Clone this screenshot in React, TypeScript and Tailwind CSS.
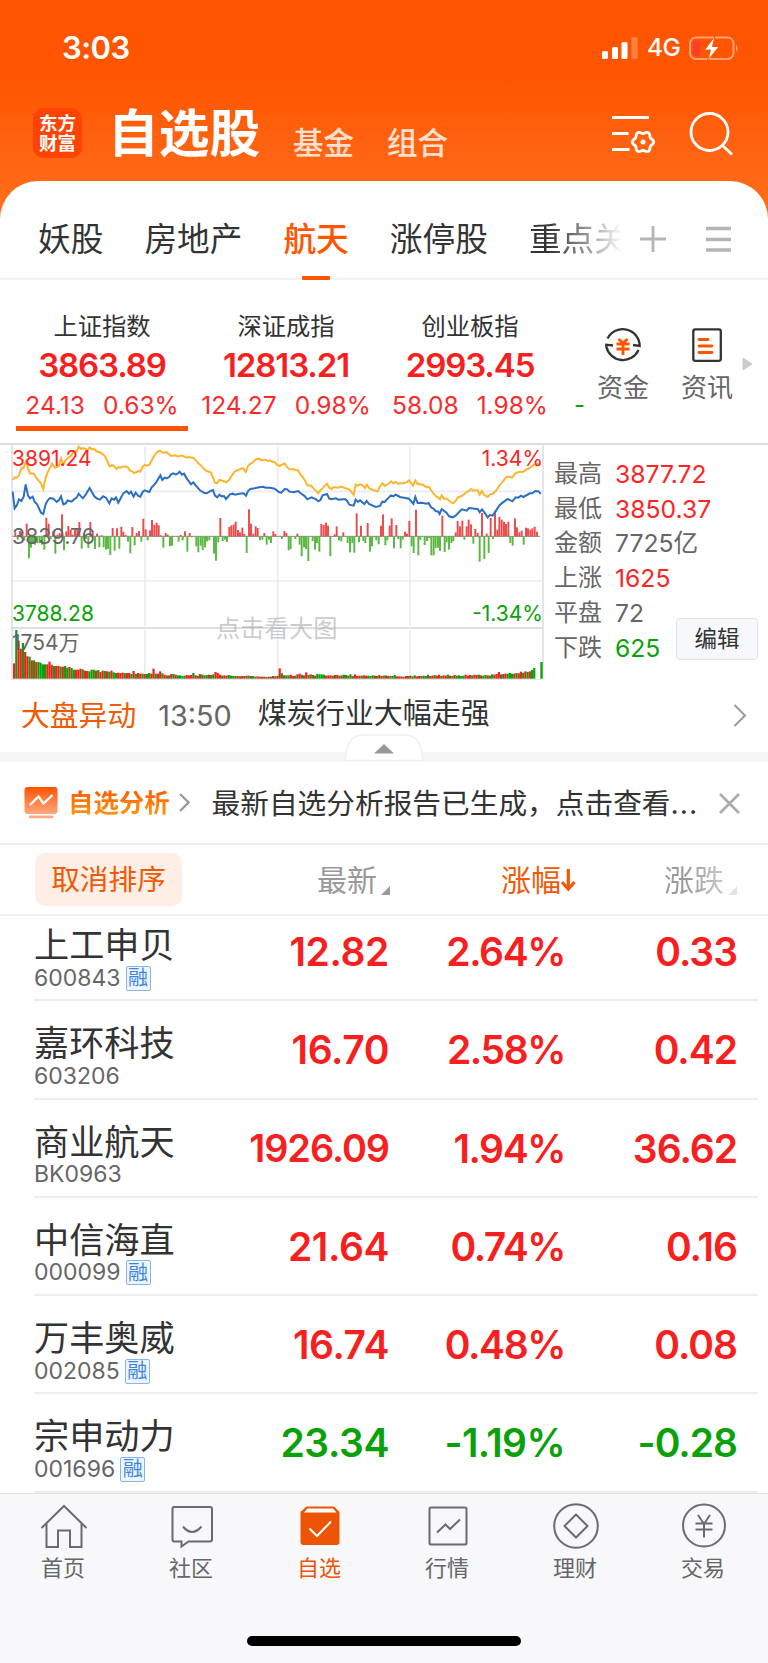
import type { ReactNode } from "react";

const UP = "#f62020";
const DOWN = "#0ba10b";

const indices = [
  { name: "上证指数", value: "3863.89", diff: "24.13", pct: "0.63%", active: true },
  { name: "深证成指", value: "12813.21", diff: "124.27", pct: "0.98%" },
  { name: "创业板指", value: "2993.45", diff: "58.08", pct: "1.98%" },
];

const summary = [
  { label: "最高", value: "3877.72", color: "text-[#fa2525]" },
  { label: "最低", value: "3850.37", color: "text-[#fa2525]" },
  { label: "金额", value: "7725亿", color: "text-[#666]" },
  { label: "上涨", value: "1625", color: "text-[#fa2525]" },
  { label: "平盘", value: "72", color: "text-[#666]" },
  { label: "下跌", value: "625", color: "text-[#0ba10b]" },
];

const stocks = [
  { name: "上工申贝", code: "600843", margin: true, price: "12.82", pct: "2.64%", diff: "0.33", up: true },
  { name: "嘉环科技", code: "603206", margin: false, price: "16.70", pct: "2.58%", diff: "0.42", up: true },
  { name: "商业航天", code: "BK0963", margin: false, price: "1926.09", pct: "1.94%", diff: "36.62", up: true },
  { name: "中信海直", code: "000099", margin: true, price: "21.64", pct: "0.74%", diff: "0.16", up: true },
  { name: "万丰奥威", code: "002085", margin: true, price: "16.74", pct: "0.48%", diff: "0.08", up: true },
  { name: "宗申动力", code: "001696", margin: true, price: "23.34", pct: "-1.19%", diff: "-0.28", up: false },
];

// chart coordinates are in thirds of a pixel
const avgLine =
  "38,150 44,142 50,143 57,136 64,115 71,113 78,93 84,115 90,131 98,130 104,134 110,145 116,152 123,160 130,177 137,143 144,125 150,113 157,101 163,113 176,109 183,85 190,103 196,92 203,85 215,75 222,62 230,65 236,50 243,57 249,54 256,57 263,60 269,52 276,58 283,57 289,64 296,66 303,68 310,74 316,80 322,93 329,109 335,106 342,107 349,117 355,111 362,113 369,110 376,109 383,112 390,122 396,124 402,129 409,126 415,123 421,125 428,110 434,105 441,107 448,104 455,91 461,80 468,70 474,64 480,62 487,68 500,66 506,72 513,78 526,76 533,80 546,76 553,80 560,83 566,81 580,84 586,89 593,98 600,104 613,118 620,123 632,127 639,142 645,158 651,160 658,150 670,153 679,157 687,150 694,139 700,130 707,122 714,121 724,115 731,116 737,126 744,108 750,102 757,99 763,92 770,87 777,86 784,91 797,89 804,93 810,91 817,95 824,96 831,104 838,108 846,104 854,100 860,110 868,118 881,118 895,122 902,135 908,141 914,150 922,166 934,167 941,176 948,182 955,190 961,181 968,175 975,167 981,161 988,174 995,177 1001,171 1015,173 1022,170 1035,174 1048,179 1054,186 1061,195 1067,164 1074,167 1081,163 1088,166 1095,174 1101,164 1108,175 1120,180 1133,184 1140,170 1147,160 1154,168 1167,160 1173,154 1180,160 1187,156 1194,161 1207,160 1220,157 1227,151 1233,158 1239,167 1246,151 1253,163 1266,163 1280,172 1286,170 1293,180 1300,190 1307,198 1314,202 1320,208 1325,196 1332,206 1340,206 1353,216 1360,220 1367,213 1373,203 1387,197 1400,186 1407,183 1413,177 1420,182 1433,180 1439,194 1446,183 1453,195 1463,201 1470,193 1478,192 1490,180 1497,168 1504,160 1512,150 1520,140 1528,140 1536,143 1546,130 1556,126 1570,125 1580,118 1592,112 1602,104 1612,102 1622,103";
const priceLine =
  "38,185 44,235 51,225 57,208 64,213 71,200 77,163 84,197 90,205 98,200 104,216 111,222 117,235 123,248 130,252 137,222 144,210 150,204 160,206 170,216 177,210 183,199 190,223 197,220 203,211 215,215 222,208 230,203 236,191 243,199 249,205 257,194 263,184 269,174 276,187 283,199 290,205 300,209 309,199 318,203 328,220 335,205 342,209 348,202 355,218 362,205 370,190 380,183 387,191 393,185 401,200 407,188 415,198 421,200 428,186 434,181 441,184 448,186 455,172 461,166 468,158 474,148 481,136 487,150 494,143 500,145 507,141 513,133 520,130 527,133 533,131 539,125 546,134 552,131 560,145 573,163 580,157 587,166 600,181 613,189 620,190 632,183 639,180 645,197 652,202 658,194 665,199 672,198 678,207 690,193 698,191 705,194 718,191 731,190 738,197 744,183 751,177 764,175 777,172 790,170 797,173 810,173 824,176 838,187 844,188 854,177 862,178 868,185 881,187 895,183 902,190 915,199 922,208 935,202 948,208 955,214 961,210 968,196 981,192 988,206 995,208 1008,205 1015,209 1035,207 1041,212 1048,224 1061,227 1067,209 1074,216 1080,211 1093,222 1100,213 1107,222 1127,231 1140,228 1147,215 1154,216 1160,209 1173,196 1180,199 1187,194 1200,201 1227,206 1240,222 1246,201 1253,219 1266,218 1280,221 1286,219 1293,232 1300,236 1307,243 1315,245 1319,252 1325,237 1340,249 1347,259 1358,262 1367,257 1380,243 1386,238 1400,242 1407,234 1425,236 1433,237 1439,247 1446,238 1453,247 1463,262 1470,255 1478,257 1488,242 1497,228 1505,220 1523,207 1537,214 1547,202 1555,203 1563,197 1570,201 1590,190 1597,190 1606,183 1616,184 1622,192";

// [x, height], positive above the zero line
const flow = [
  [46,12],[53,-10],[60,16],[67,14],[73,-12],[80,38],[87,-66],[93,-34],[99,-22],[105,-25],[112,-20],[119,-20],[126,-25],[133,-40],[139,56],[146,38],[152,-8],[159,15],[166,-52],[172,5],[179,10],[186,66],[192,-42],[199,15],[205,31],[212,20],[218,5],[225,20],[232,22],[238,43],[245,-37],[252,8],[258,-8],[265,-35],[271,43],[278,15],[285,-38],[291,8],[298,-33],[305,3],[311,-33],[318,-40],[324,-38],[331,-56],[338,25],[344,-43],[351,24],[358,-37],[364,29],[370,14],[377,4],[384,-16],[391,-51],[397,28],[404,-27],[410,10],[417,16],[424,-16],[430,53],[437,21],[443,-12],[450,18],[456,49],[463,35],[470,41],[476,33],[483,3],[490,-34],[497,10],[503,5],[510,-30],[516,-28],[536,-16],[542,4],[548,-12],[555,15],[562,-46],[569,10],[575,-3],[589,-30],[595,-48],[602,-28],[608,-41],[615,-33],[621,-15],[628,-12],[642,-52],[648,-73],[655,-18],[661,55],[668,-14],[675,-10],[681,-17],[688,28],[694,33],[701,35],[707,44],[714,19],[720,12],[727,26],[733,7],[740,-50],[747,81],[753,38],[760,8],[767,30],[773,25],[780,-12],[787,-10],[793,10],[800,-25],[807,-10],[813,-20],[820,15],[826,7],
  [846,-8],[853,16],[859,10],[866,-42],[872,-38],[886,-8],[892,8],[899,-25],[905,-60],[912,-33],[918,-38],[925,-74],[938,-14],[945,-40],[951,-20],[958,-46],[964,37],[971,34],[978,41],[984,32],[991,-60],[1004,6],[1010,30],[1017,-12],[1024,-15],[1030,12],[1043,-20],[1050,-48],[1057,-20],[1063,-49],[1070,69],[1077,-18],[1083,31],[1090,-14],[1096,-20],[1103,40],[1110,-46],[1116,-30],[1123,-3],[1129,-12],[1136,-24],[1143,32],[1149,66],[1156,-27],[1162,-12],[1169,32],[1175,54],[1182,-36],[1189,34],[1195,-8],[1202,-36],[1208,-10],[1215,14],[1221,8],[1228,46],[1235,-30],[1241,-50],[1248,80],[1255,-57],[1261,-10],[1274,-26],[1281,-14],[1288,-5],[1294,-57],[1301,-57],[1307,-35],[1314,-34],[1320,-44],[1327,62],[1334,-47],[1340,-18],[1347,-40],[1354,-20],[1360,-15],[1367,12],[1373,46],[1380,30],[1387,47],[1393,-10],[1400,30],[1406,50],[1413,36],[1420,-22],[1426,22],[1433,10],[1439,-76],[1446,70],[1453,-68],[1460,8],[1466,-50],[1472,55],[1479,-8],[1485,70],[1492,20],[1498,58],[1505,50],[1512,44],[1518,37],[1525,44],[1531,-20],[1538,-28],[1545,54],[1551,27],[1558,12],[1565,17],[1571,-25],[1578,26],[1584,24],[1591,20],[1597,24],[1604,29],[1611,14],
];

const volume = [
  46,146,114,90,107,80,67,66,55,55,50,50,48,43,43,43,51,42,38,38,38,36,36,38,33,35,32,27,27,27,30,28,24,23,22,27,27,24,26,20,24,23,22,21,24,19,17,18,17,18,17,17,17,14,23,14,17,15,15,14,14,17,15,30,15,15,22,16,12,10,10,14,14,12,10,10,8,9,11,10,11,17,10,9,14,12,10,11,12,11,13,20,17,12,9,10,9,11,9,8,8,8,7,8,8,9,9,8,8,6,7,6,6,6,5,6,6,8,7,8,31,16,10,10,10,12,8,9,13,15,12,10,19,11,13,11,9,14,13,13,12,9,10,10,9,11,11,9,10,12,11,9,13,8,13,8,9,9,10,9,9,8,10,9,8,11,8,9,10,8,8,8,11,7,7,7,6,8,8,9,7,10,7,8,8,9,8,12,8,9,11,9,12,8,10,9,12,9,8,11,9,10,8,9,12,9,11,10,12,11,12,10,9,11,10,9,13,12,14,20,13,14,15,15,17,15,15,17,16,21,18,22,20,22,26,32,
];
const volumeColors = "rgrrgrrgrgrggggrrrgrrgrggrggrrrgrrgggrgrrgrgrggrrrgrrgrgrrgrggr";

function Flow() {
  return (
    <svg className="block h-[237px] w-[533px]" viewBox="33 39 1599 711">
      <g stroke="#e9ecf2" strokeWidth="5" fill="none">
        <path d="M37 184H1628M37 453H1628M435 50V587M833 50V587M1230 50V587M435 600V744M833 600V744M1230 600V744" />
      </g>
      <path d="M36 40V748M1629 40V748" stroke="#dde0e5" strokeWidth="5" />
      <path d="M33 594H1629" stroke="#d2d7dc" strokeWidth="5" />
      <path d="M33 748H1629" stroke="#dde0e5" strokeWidth="3" />
      <path d="M37 319H1621" stroke="#888" strokeWidth="3" />
      {flow.map(([x, h], i) => (
        <rect key={i} x={x - 2.9} y={h > 0 ? 319 - h : 319} width="5.8" height={Math.abs(h)} fill={h > 0 ? "#ec4a4a" : "#58b83f"} />
      ))}
      {volume.map((h, i) => (
        <rect
          key={i}
          x={39 + i * 6.64}
          y={746 - h}
          width="6.64"
          height={h}
          fill={volumeColors[i % volumeColors.length] === "r" ? UP : DOWN}
        />
      ))}
      <rect x="1621" y="696" width="7" height="50" fill={DOWN} />
      <polyline points={avgLine} fill="none" stroke="#fdb52e" strokeWidth="6" />
      <polyline points={priceLine} fill="none" stroke="#2b6fc0" strokeWidth="6" />
    </svg>
  );
}

function StatusBar() {
  return (
    <div className="flex h-[95px] items-center justify-between pr-[29px] pl-[62px]">
      <span className="text-[31px] leading-none font-semibold tracking-[-0.5px]">3:03</span>
      <div className="flex items-center">
        <svg width="36" height="24" viewBox="0 0 36 24" fill="#fff">
          <rect x="0" y="15" width="6" height="8" rx="1.5" />
          <rect x="10" y="11" width="6" height="12" rx="1.5" />
          <rect x="19.500" y="6" width="6" height="17" rx="1.5" />
          <rect x="29.500" y="1" width="6" height="22" rx="1.5" opacity=".25" />
        </svg>
        <span className="ml-[9px] text-[24.500px] leading-none font-medium tracking-[-0.7px]">4G</span>
        <svg className="ml-[9px]" width="50" height="26" viewBox="0 0 50 26">
          <rect x="1" y="2.500" width="43.500" height="21.500" rx="6" fill="none" stroke="#fff" strokeOpacity=".45" strokeWidth="2" />
          <path d="M47 9.500a6 6 0 0 1 0 7.500z" fill="#fff" fillOpacity=".5" />
          <rect x="4" y="5.500" width="6.500" height="15.500" rx="2.500" fill="#ff3b30" />
          <path d="M26 1 15.500 15h6L18.500 26 30 11.500h-6.500L26 1z" fill="#fff" stroke="#ff5a00" strokeWidth="1" />
        </svg>
      </div>
    </div>
  );
}

// six-lobed settings wheel
const gear = Array.from({ length: 72 }, (_, i) => {
  const a = (i / 72) * Math.PI * 2;
  const r = 9.6 + 1.1 * Math.cos(6 * a);
  return `${(31 + r * Math.cos(a)).toFixed(2)},${(29 + r * Math.sin(a)).toFixed(2)}`;
}).join(" ");

function Header() {
  return (
    <div className="flex h-[86px] items-center pr-[34px] pl-[33px]">
      <div className="mt-[-10px] flex h-[50px] w-[49px] flex-col items-center justify-center rounded-[11px] bg-[#ff4304] text-[18.500px] leading-[20px] font-bold">
        <span>东方</span>
        <span>财富</span>
      </div>
      <span className="mt-[-8px] ml-[26px] text-[50.700px] leading-none font-bold">自选股</span>
      <span className="mt-[10px] ml-[33px] text-[30.500px] leading-none font-medium text-white/80">基金</span>
      <span className="mt-[10px] ml-[33px] text-[30.500px] leading-none font-medium text-white/80">组合</span>
      <svg className="mt-[-10px] ml-auto" width="44" height="40" viewBox="0 0 44 40" fill="none" stroke="#fff" strokeWidth="2.800">
        <path d="M0 4.500h37M0 20.500h16.500M0 36.500h17.500" />
        <polygon points={gear} strokeLinejoin="round" />
        <circle cx="31" cy="29" r="2.500" fill="#fff" stroke="none" />
      </svg>
      <svg className="mt-[-9px] ml-[33px]" width="45" height="46" viewBox="0 0 45 46" fill="none" stroke="#fff" strokeWidth="2.800">
        <circle cx="20.500" cy="21" r="18.500" />
        <path d="M33.500 34.500 43 43.500" />
      </svg>
    </div>
  );
}

function Tabs() {
  return (
    <div className="flex h-[99px] items-center border-b-2 border-[#f2f2f3] pt-[18px] pr-[36px] pl-[38px] text-[32.700px] leading-[56px] text-[#333]">
      <div className="flex w-[584px] gap-[41px] overflow-hidden whitespace-nowrap">
        <span>妖股</span>
        <span>房地产</span>
        <span className="font-medium text-[#ff5500]">航天</span>
        <span>涨停股</span>
        <span className="bg-gradient-to-r from-[#333] from-20% via-[#999] via-60% to-white to-95% bg-clip-text text-transparent">重点关</span>
      </div>
      <svg className="ml-auto" width="26" height="26" viewBox="0 0 26 26" stroke="#b5b5b5" strokeWidth="2.800">
        <path d="M0 13h26M13 0v26" />
      </svg>
      <svg className="ml-[40px]" width="26" height="26" viewBox="0 0 26 26" stroke="#b5b5b5" strokeWidth="3.300">
        <path d="M0 2.500h25M0 13.500h25M0 24h25" />
      </svg>
    </div>
  );
}

function Indices() {
  return (
    <div className="flex h-[163px] pl-[10px]">
      {indices.map((x) => (
        <div key={x.name} className="flex w-[184px] shrink-0 flex-col items-center pt-[33px]">
          <span className="text-[24.300px] leading-[26px] text-[#333]">{x.name}</span>
          <span className="mt-[13px] text-[33px] leading-[26px] font-semibold tracking-[-1.1px] text-[#f62020]">{x.value}</span>
          <span className="mt-[14px] flex gap-[18px] text-[24.500px] leading-[26px] text-[#fa2b2b]">
            <span>{x.diff}</span>
            <span>{x.pct}</span>
          </span>
          {x.active && <div className="mt-[8px] h-[5px] w-[172px] bg-[#ff5500]" />}
        </div>
      ))}
      <span className="mt-[112px] ml-[12px] w-[10px] text-[24px] leading-[26px] text-[#0ba10b]">-</span>
      <div className="ml-[-3px] flex">
        <Shortcut label="资金">
          <svg width="40" height="40" viewBox="0 0 40 40" fill="none" stroke="#333" strokeWidth="2.300">
            <path d="M4.500 14.500A17 17 0 0 1 36.700 22L30 21M35.500 26A17 17 0 0 1 3.300 22.500V20.700L10 21.500" />
            <path d="M15.500 15l4.500 4 4.500-4M13.500 20h13M13.500 25h13M20 19v12" stroke="#ff5500" strokeWidth="2.800" />
          </svg>
        </Shortcut>
        <Shortcut label="资讯">
          <svg width="40" height="40" viewBox="0 0 40 40" fill="none" stroke="#333" strokeWidth="2.300">
            <rect x="6.300" y="5.300" width="27.500" height="31.500" rx="2" />
            <path d="M12 15.500h9M12 22h13M12 28.500h13" stroke="#ff5500" strokeWidth="2.800" strokeLinecap="round" />
          </svg>
        </Shortcut>
      </div>
      <svg className="mt-[77px] ml-[-7px]" width="11" height="14" viewBox="0 0 11 14">
        <path d="M1 1v12l9-6z" fill="#ccc" stroke="#ccc" strokeLinejoin="round" />
      </svg>
    </div>
  );
}

function Shortcut({ label, children }: { label: string; children: ReactNode }) {
  return (
    <div className="flex w-[84px] shrink-0 flex-col items-center pt-[44px] text-[26px] leading-[28px] text-[#666]">
      {children}
      <span className="mt-[10px]">{label}</span>
    </div>
  );
}

function Market() {
  return (
    <div className="flex h-[237px] border-t-2 border-[#dcdee2] pl-[11px]">
      <div className="relative mt-[-2px] w-[533px] shrink-0 text-[21px] leading-none">
        <Flow />
        <span className="absolute top-[5px] left-[1px] text-[#fa2525]">3891.24</span>
        <span className="absolute top-[5px] right-[1px] text-[#fa2525]">1.34%</span>
        <span className="absolute top-[83px] left-[1px] text-[21.300px] text-[#666]">3839.76</span>
        <span className="absolute top-[160px] left-[1px] text-[#0ba10b]">3788.28</span>
        <span className="absolute top-[160px] right-[1px] text-[#0ba10b]">-1.34%</span>
        <span className="absolute top-[189px] left-[1px] text-[#666]">1754万</span>
        <span className="absolute top-[173px] left-[205px] text-[24.300px] text-[#999]/50">点击看大图</span>
      </div>
      <div className="relative flex-1 pt-[12px] pl-[10px] text-[24px] leading-[34.700px] text-[#666]">
        {summary.map((s) => (
          <div key={s.label} className="flex gap-[13px]">
            <span>{s.label}</span>
            <span className={`text-[24.700px] ${s.color}`}>{s.value}</span>
          </div>
        ))}
        <button className="absolute top-[173px] right-[10px] h-[42px] w-[82px] rounded-[4px] border-[1.500px] border-[#dfe2e8] bg-[#f7f8fb] text-[22.500px] leading-none text-[#333]">
          编辑
        </button>
      </div>
    </div>
  );
}

function News() {
  return (
    <div className="relative h-[82px] border-b-[10px] border-[#f6f7f9]">
      <div className="flex h-[72px] items-center pr-[21px] pl-[21px] leading-none">
        <span className="text-[28.800px] text-[#f05a05]">大盘异动</span>
        <span className="ml-[22px] text-[28.800px] text-[#666]">13:50</span>
        <span className="mt-[-6px] ml-[26px] text-[29px] text-[#333]">煤炭行业大幅走强</span>
        <svg className="mt-[-2px] ml-auto" width="14" height="23" viewBox="0 0 14 23" fill="none" stroke="#999" strokeWidth="2">
          <path d="M1.500 1 12 11.500 1.500 22" />
        </svg>
      </div>
      <svg className="absolute top-[54px] left-[344px]" width="80" height="28" viewBox="0 0 80 28">
        <path d="M1 26.500C3 6 9 1 21 1H59C71 1 77 6 79 26.500Z" fill="#fff" stroke="#eff0f2" strokeWidth="1.500" />
        <path d="M30 19.500 40 10l10 9.500z" fill="#999" />
      </svg>
    </div>
  );
}

function Analysis() {
  return (
    <div className="flex h-[83px] items-center border-b-2 border-[#eeeeee] pr-[28px] pl-[24px] leading-none">
      <svg width="34" height="32" viewBox="0 0 34 32">
        <defs>
          <linearGradient id="card" x1="0" y1="0" x2="0" y2="1">
            <stop offset="0" stopColor="#ff5300" />
            <stop offset="1" stopColor="#ffa880" />
          </linearGradient>
        </defs>
        <rect x=".5" y="0" width="33" height="27" rx="3" fill="url(#card)" />
        <rect x="5" y="28.500" width="24.500" height="2.700" rx="1.300" fill="#ffab85" />
        <path d="M6 18l8.500-8.500 5 7L28.500 8" fill="none" stroke="#fff" strokeWidth="2.300" />
      </svg>
      <span className="ml-[10px] bg-gradient-to-b from-[#ff5a00] to-[#ff9412] bg-clip-text text-[25.400px] font-bold text-transparent">自选分析</span>
      <svg className="ml-[9px]" width="11" height="19" viewBox="0 0 11 19" fill="none" stroke="#999" strokeWidth="2.300">
        <path d="M1 1l8.500 8.500L1 18" />
      </svg>
      <span className="mt-[4px] ml-[22px] text-[28.700px] whitespace-nowrap text-[#333]">
        最新自选分析报告已生成，点击查看<span className="tracking-[1px]">...</span>
      </span>
      <svg className="mt-[2px] ml-auto" width="21" height="21" viewBox="0 0 21 21" stroke="#aaa" strokeWidth="2.500">
        <path d="M1 1l19 19M20 1 1 20" />
      </svg>
    </div>
  );
}

function TableHead() {
  return (
    <div className="flex h-[71px] items-center border-b-2 border-[#f0f0f1] pl-[35px] text-[30px] leading-none text-[#999]">
      <span className="flex h-[53px] w-[147px] items-center justify-center rounded-[10px] bg-[#feeee6] pt-[2px] text-[28.700px] text-[#f05a05]">
        取消排序
      </span>
      <div className="ml-[135px] flex w-[184px] items-center">
        最新
        <svg className="mt-[22px] ml-[4px]" width="9" height="9" viewBox="0 0 9 9">
          <path d="M9 0v9H0z" fill="#999" />
        </svg>
      </div>
      <div className="flex w-[163px] items-center text-[#f05a05]">
        涨幅
        <svg width="16" height="24" viewBox="0 0 16 24" fill="none" stroke="#f05a05" strokeWidth="3.200">
          <path d="M7.300 1v20M1 14l6.300 7 6.300-7" />
        </svg>
      </div>
      <div className="flex items-center bg-gradient-to-r from-[#999] from-30% to-[#ddd] bg-clip-text text-transparent">
        涨跌
        <svg className="mt-[22px] ml-[4px]" width="9" height="9" viewBox="0 0 9 9">
          <path d="M9 0v9H0z" fill="#e4e4e4" />
        </svg>
      </div>
    </div>
  );
}

function StockList() {
  return (
    <div className="h-[577px] overflow-hidden">
      <div className="mt-[-13px]">
        {stocks.map((s) => (
          <div
            key={s.code}
            className="mr-[10px] ml-[34px] flex h-[98.300px] border-b-2 border-[#eeeeef] text-[39px] leading-none font-semibold"
          >
            <div className="w-[180px] pt-[24px] font-normal">
              <div className="text-[35.200px] leading-[36px] text-[#333]">{s.name}</div>
              <div className="mt-[1px] flex h-[28px] items-center gap-[5px] text-[23px] text-[#666]">
                {s.code}
                {s.margin && (
                  <span className="flex size-[25px] items-center justify-center rounded-[2px] border-[1.500px] border-[#8ab4e8] bg-[#eef5fd] text-[20px] text-[#3c86dc]">
                    融
                  </span>
                )}
              </div>
            </div>
            <div className={`flex flex-1 pt-[29px] text-right tracking-[-1px] ${s.up ? "text-[#f62020]" : "text-[#0ba10b]"}`}>
              <span className={`w-[175px] ${s.price.length > 6 ? "text-[37.800px] leading-[39px]" : "tracking-[-0.4px]"}`}>
                {s.price}
              </span>
              <span className={`w-[176px] ${s.up ? "tracking-[-1.4px]" : "tracking-[-0.6px]"}`}>{s.pct}</span>
              <span className="w-[172px]">{s.diff}</span>
            </div>
          </div>
        ))}
      </div>
    </div>
  );
}

const navItems: { label: string; active?: boolean; icon: ReactNode }[] = [
  { label: "首页", icon: <path d="M1.500 25 24 3l22.500 22M6.500 20.500V44H18V27.500H30V44H41.500V20.500" /> },
  {
    label: "社区",
    icon: (
      <>
        <path d="M6 4H42Q44 4 44 6V36.500Q44 38.500 42 38.500H20.500L13.500 43.500V38.500H6Q4.500 38.500 4.500 36.500V6Q4.500 4 6 4Z" />
        <path d="M15 23.500q9 11 18.500 0" />
      </>
    ),
  },
  {
    label: "自选",
    active: true,
    icon: (
      <>
        <path d="M10.500 3.500H38L43.500 9V39Q43.500 42 40.500 42H7.500Q4.500 42 4.500 39V9Z" fill="#eb5505" stroke="none" />
        <path d="M11.500 5.500H37L40.500 9.500H8Z" fill="#fff" stroke="none" />
        <path d="M13.500 25.500 21 33 35 18.500" stroke="#fff" />
      </>
    ),
  },
  {
    label: "行情",
    icon: (
      <>
        <rect x="5.500" y="4.500" width="37" height="37" rx="1.500" />
        <path d="M13 29.500 21.500 21.500 26 26 36 16.500" />
      </>
    ),
  },
  {
    label: "理财",
    icon: (
      <>
        <circle cx="24" cy="23" r="21.800" />
        <path d="M24 11.500 35.500 23 24 34.500 12.500 23Z" strokeLinejoin="round" />
      </>
    ),
  },
  {
    label: "交易",
    icon: (
      <>
        <circle cx="24" cy="22.500" r="21" />
        <path d="M18 12l6 9 6-9M15.500 20.500h17M15.500 26.500h17M24 20.500v14" />
      </>
    ),
  },
];

function BottomNav() {
  return (
    <div className="flex h-[170px] flex-col items-center border-t border-[#dfe1e4] bg-[#f8f8fb]">
      <div className="grid w-full grid-cols-6 pt-[9px]">
        {navItems.map((n) => (
          <div
            key={n.label}
            className={`flex flex-col items-center text-[22px] leading-none ${n.active ? "text-[#eb5505]" : "text-[#666]"}`}
          >
            <svg width="48" height="48" viewBox="0 0 48 48" fill="none" stroke={n.active ? "#eb5505" : "#6b6b6b"} strokeWidth="2">
              {n.icon}
            </svg>
            <span className="mt-[6px] mr-[2px]">{n.label}</span>
          </div>
        ))}
      </div>
      <div className="mt-[57px] h-[10px] w-[274px] rounded-full bg-black" />
    </div>
  );
}

export default function App() {
  return (
    <main className="h-[1663px] w-[768px] overflow-hidden bg-white font-['Inter','Noto_Sans_CJK_SC',sans-serif]">
      <div className="h-[220px] bg-gradient-to-b from-[#ff5500] from-35% to-[#ff701c] text-white">
        <StatusBar />
        <Header />
      </div>
      <div className="relative mt-[-39px] rounded-t-[38px] bg-white">
        <Tabs />
        <div className="absolute top-[95px] left-[302px] h-[4px] w-[28px] rounded-[1px] bg-[#ff5500]" />
        <Indices />
        <Market />
        <News />
        <Analysis />
        <TableHead />
        <StockList />
        <BottomNav />
      </div>
    </main>
  );
}
